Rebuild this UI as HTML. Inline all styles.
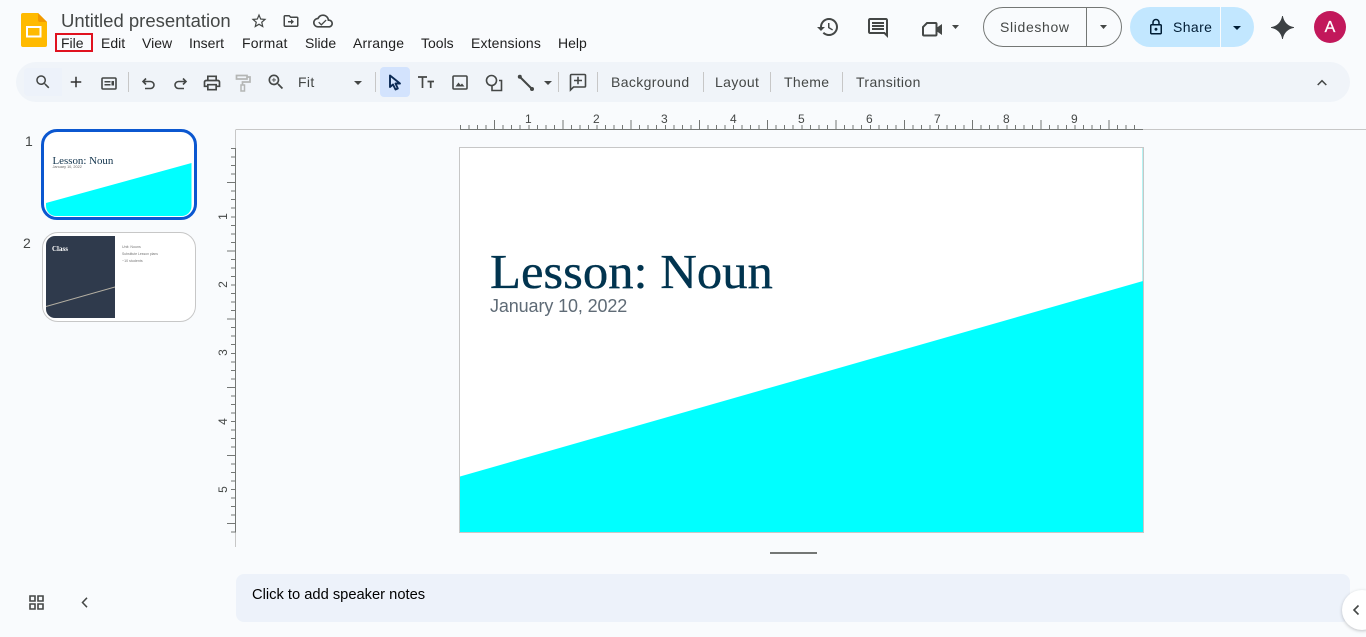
<!DOCTYPE html>
<html lang="en"><head><meta charset="utf-8"><title>Untitled presentation</title>
<style>
html,body{margin:0;padding:0;width:1366px;height:637px;overflow:hidden;background:#f9fbfd;font-family:"Liberation Sans",sans-serif}
.a{position:absolute;white-space:nowrap}
.m{top:35px;font-size:14px;line-height:17px;color:#1f1f1f}
.t{top:74px;font-size:14px;line-height:17px;color:#444746;letter-spacing:.38px}
.r{top:113px;font-size:12px;line-height:13px;color:#444746}
.rv{left:220px;font-size:12px;line-height:13px;color:#444746;transform:rotate(-90deg)}
.sep{position:absolute;top:72px;width:1px;height:20px;background:#c7c7c7}
svg.i{position:absolute;fill:#444746}
</style></head><body>

<!-- logo -->
<svg class="a" style="left:21px;top:13px" width="26" height="34" viewBox="0 0 26 34">
<path d="M2 0H17L26 9V32a2 2 0 0 1-2 2H2a2 2 0 0 1-2-2V2a2 2 0 0 1 2-2z" fill="#ffba00"/>
<path d="M17 0L26 9H19a2 2 0 0 1-2-2z" fill="#f29900"/>
<rect x="6" y="14" width="13.500" height="9.500" fill="none" stroke="#fff" stroke-width="2"/>
</svg>

<div class="a" style="left:61px;top:10px;font-size:18.500px;line-height:21px;color:#444746">Untitled presentation</div>
<svg class="i" style="left:250px;top:12px" width="18" height="18" viewBox="0 0 24 24"><path d="M22 9.240l-7.190-.620L12 2 9.190 8.630 2 9.240l5.460 4.730L5.820 21 12 17.270 18.180 21l-1.630-7.030L22 9.240zM12 15.400l-3.760 2.270 1-4.280-3.320-2.880 4.380-.380L12 6.100l1.710 4.040 4.380.380-3.320 2.880 1 4.280L12 15.400z"/></svg>
<svg class="i" style="left:282px;top:12px" width="18" height="18" viewBox="0 0 24 24"><path d="M20 6h-8l-2-2H4c-1.100 0-2 .9-2 2v12c0 1.100.9 2 2 2h16c1.100 0 2-.9 2-2V8c0-1.100-.9-2-2-2zm0 12H4V6h5.170l2 2H20v10zm-8-1.500l4-3.500-4-3.500V12H8v2h4v2.500z"/></svg>
<svg class="i" style="left:313px;top:11px" width="20" height="20" viewBox="0 0 24 24"><path d="M19.350 10.040C18.670 6.590 15.640 4 12 4 9.110 4 6.600 5.640 5.350 8.040 2.340 8.360 0 10.910 0 14c0 3.310 2.690 6 6 6h13c2.760 0 5-2.240 5-5 0-2.640-2.050-4.780-4.650-4.960zM19 18H6c-2.210 0-4-1.790-4-4 0-2.050 1.530-3.760 3.560-3.970l1.070-.11.500-.950C8.080 7.140 9.940 6 12 6c2.620 0 4.880 1.860 5.390 4.430l.300 1.500 1.530.110c1.560.100 2.780 1.410 2.780 2.960 0 1.650-1.350 3-3 3zm-9-2.500l-2.600-2.600-1.100 1.100L10 17.700l6.300-6.300-1.100-1.100z"/></svg>

<!-- menu -->
<div class="a" style="left:55px;top:33px;width:34px;height:15px;border:2px solid #e0121f"></div>
<div class="a m" style="left:61px">File</div>
<div class="a m" style="left:101px">Edit</div>
<div class="a m" style="left:142px">View</div>
<div class="a m" style="left:189px">Insert</div>
<div class="a m" style="left:242px;letter-spacing:.2px">Format</div>
<div class="a m" style="left:305px">Slide</div>
<div class="a m" style="left:353px;letter-spacing:.2px">Arrange</div>
<div class="a m" style="left:421px">Tools</div>
<div class="a m" style="left:471px;letter-spacing:.15px">Extensions</div>
<div class="a m" style="left:558px">Help</div>

<!-- header right -->
<svg class="i" style="left:816px;top:15px" width="24" height="24" viewBox="0 0 24 24"><path d="M13 3c-4.970 0-9 4.030-9 9H1l3.890 3.890.070.140L9 12H6c0-3.870 3.130-7 7-7s7 3.130 7 7-3.130 7-7 7c-1.930 0-3.680-.790-4.940-2.060l-1.420 1.420C8.270 19.990 10.510 21 13 21c4.970 0 9-4.030 9-9s-4.030-9-9-9zm-1 5v5l4.280 2.540.720-1.210-3.500-2.080V8H12z"/></svg>
<svg class="i" style="left:866px;top:16px" width="24" height="24" viewBox="0 0 24 24"><path d="M21.990 4c0-1.100-.890-2-1.990-2H4c-1.100 0-2 .9-2 2v12c0 1.100.9 2 2 2h14l4 4-.010-18zM20 4v13.170L18.830 16H4V4h16zM6 12h12v2H6zm0-3h12v2H6zm0-3h12v2H6z"/></svg>
<svg class="a" style="left:921px;top:20px" width="23" height="17" viewBox="0 0 23 17"><path d="M6 3H14.500a1 1 0 0 1 1 1V14.500a1 1 0 0 1-1 1H3a1 1 0 0 1-1-1V7z" fill="none" stroke="#444746" stroke-width="2"/><path d="M16 7.500L21 4V15L16 11.500z" fill="#444746"/></svg>
<svg class="i" style="left:952px;top:25px" width="7" height="4" viewBox="0 0 10 5" preserveAspectRatio="none"><path d="M0 0l5 5 5-5z"/></svg>

<div class="a" style="left:983px;top:7px;width:137px;height:38px;border:1px solid #747775;border-radius:20px"></div>
<div class="a" style="left:1086px;top:8px;width:1px;height:38px;background:#747775"></div>
<div class="a" style="left:1000px;top:19px;font-size:14px;line-height:17px;color:#444746;letter-spacing:.65px">Slideshow</div>
<svg class="i" style="left:1100px;top:25px" width="7" height="4" viewBox="0 0 10 5" preserveAspectRatio="none"><path d="M0 0l5 5 5-5z"/></svg>

<div class="a" style="left:1130px;top:7px;width:124px;height:40px;border-radius:20px;background:#c2e7ff"></div>
<div class="a" style="left:1220px;top:7px;width:1px;height:40px;background:#f9fbfd"></div>
<svg class="i" style="left:1147px;top:18px;fill:#001d35" width="18" height="18" viewBox="0 0 24 24"><path d="M18 8h-1V6c0-2.760-2.240-5-5-5S7 3.240 7 6v2H6c-1.100 0-2 .9-2 2v10c0 1.100.9 2 2 2h12c1.100 0 2-.9 2-2V10c0-1.100-.9-2-2-2zM9 6c0-1.660 1.340-3 3-3s3 1.340 3 3v2H9V6zm9 14H6V10h12v10zm-6-3c1.100 0 2-.9 2-2s-.9-2-2-2-2 .9-2 2 .9 2 2 2z"/></svg>
<div class="a" style="left:1173px;top:19px;font-size:14px;line-height:17px;color:#001d35;letter-spacing:.4px">Share</div>
<svg class="i" style="left:1233px;top:26px;fill:#001d35" width="8" height="4" viewBox="0 0 10 5" preserveAspectRatio="none"><path d="M0 0l5 5 5-5z"/></svg>

<svg class="a" style="left:1271px;top:16px" width="23" height="23" viewBox="0 0 24 24"><path d="M12 0C13 6.500 17.500 11 24 12 17.500 13 13 17.500 12 24 11 17.500 6.500 13 0 12 6.500 11 11 6.500 12 0z" fill="#3c4043" stroke="#3c4043" stroke-width=".8"/></svg>
<div class="a" style="left:1314px;top:11px;width:32px;height:32px;border-radius:50%;background:#c2185b;color:#fff;font-size:16px;line-height:33px;text-align:center;-webkit-text-stroke:.3px #fff">A</div>

<!-- toolbar -->
<div class="a" style="left:16px;top:62px;width:1334px;height:40px;border-radius:20px;background:#f0f4f9"></div>
<div class="a" style="left:24px;top:68px;width:38px;height:28px;border-radius:4px 0 0 4px;background:#edf2fa"></div>
<svg class="i" style="left:34px;top:73px" width="18" height="18" viewBox="0 0 24 24"><path d="M15.500 14h-.790l-.280-.270C15.410 12.590 16 11.110 16 9.500 16 5.910 13.090 3 9.500 3S3 5.910 3 9.500 5.910 16 9.500 16c1.610 0 3.090-.590 4.230-1.570l.270.280v.790l5 4.990L20.490 19l-4.990-5zm-6 0C7.010 14 5 11.990 5 9.500S7.010 5 9.500 5 14 7.010 14 9.500 11.990 14 9.500 14z"/></svg>
<svg class="i" style="left:67px;top:73px;fill:#303030" width="18" height="18" viewBox="0 0 24 24"><path d="M19 13h-6v6h-2v-6H5v-2h6V5h2v6h6v2z"/></svg>
<svg class="a" style="left:101px;top:77px" width="16" height="13" viewBox="0 0 16 13"><rect x="1" y="1" width="14" height="11" rx="1" fill="none" stroke="#444746" stroke-width="1.600"/><rect x="3.500" y="4" width="6" height="1.500" fill="#444746"/><rect x="3.500" y="7" width="6" height="1.500" fill="#444746"/><rect x="10.500" y="4" width="2.500" height="4.500" fill="#444746"/></svg>
<div class="sep" style="left:128px"></div>
<svg class="a" style="left:141px;top:76px" width="15" height="15" viewBox="0 0 15 15"><path d="M5 2.500L2 5.500 5 8.500M2.500 5.500H9.500A3.500 3.500 0 0 1 9.500 12.500H4" fill="none" stroke="#444746" stroke-width="1.600"/></svg>
<svg class="a" style="left:173px;top:76px" width="15" height="15" viewBox="0 0 15 15"><path d="M10 2.500L13 5.500 10 8.500M12.500 5.500H5.500A3.500 3.500 0 0 0 5.500 12.500H11" fill="none" stroke="#444746" stroke-width="1.600"/></svg>
<svg class="i" style="left:202px;top:73px" width="20" height="20" viewBox="0 0 24 24"><path d="M19 8h-1V3H6v5H5c-1.660 0-3 1.340-3 3v6h4v4h12v-4h4v-6c0-1.660-1.340-3-3-3zM8 5h8v3H8V5zm8 12v2H8v-4h8v2zm2-2v-2H6v2H4v-4c0-.550.450-1 1-1h14c.550 0 1 .450 1 1v4h-2z"/></svg>
<svg class="a" style="left:235px;top:74px" width="16" height="18" viewBox="0 0 16 18"><path d="M1.500 1.500H12V5H1.500zM12 3H15V8H7.500V11" fill="none" stroke="#b4b6b5" stroke-width="1.700"/><rect x="6" y="11" width="3.500" height="6" fill="none" stroke="#b4b6b5" stroke-width="1.500"/></svg>
<svg class="i" style="left:266px;top:72px" width="20" height="20" viewBox="0 0 24 24"><path d="M15.500 14h-.790l-.280-.270C15.410 12.590 16 11.110 16 9.500 16 5.910 13.090 3 9.500 3S3 5.910 3 9.500 5.910 16 9.500 16c1.610 0 3.090-.590 4.230-1.570l.270.280v.790l5 4.990L20.490 19l-4.990-5zm-6 0C7.010 14 5 11.990 5 9.500S7.010 5 9.500 5 14 7.010 14 9.500 11.990 14 9.500 14zM12 10h-2v2H9v-2H7V9h2V7h1v2h2v1z"/></svg>
<div class="a t" style="left:298px">Fit</div>
<svg class="i" style="left:354px;top:81px" width="8" height="4" viewBox="0 0 10 5" preserveAspectRatio="none"><path d="M0 0l5 5 5-5z"/></svg>
<div class="sep" style="left:375px"></div>
<div class="a" style="left:380px;top:67px;width:30px;height:30px;border-radius:4px;background:#d3e3fd"></div>
<svg class="a" style="left:388px;top:74px" width="14" height="17" viewBox="0 0 14 17"><path d="M2 1.500V13L5 10.500 7.500 15.500 9.800 14.500 7.500 9.500H12z" fill="none" stroke="#0b2a55" stroke-width="1.900" stroke-linejoin="round"/></svg>
<svg class="a" style="left:417px;top:75px" width="18" height="14" viewBox="0 0 18 14"><path d="M1 2H10M5.500 2V13M10.500 6.500H17M13.700 6.500V13" fill="none" stroke="#444746" stroke-width="1.700"/></svg>
<svg class="a" style="left:452px;top:75px" width="16" height="15" viewBox="0 0 16 15"><rect x="1" y="1" width="14" height="13" rx="1" fill="none" stroke="#444746" stroke-width="1.600"/><path d="M3.500 11.500L6.500 7.500 8.500 10 10 8.500 12.500 11.500z" fill="#444746"/></svg>
<svg class="a" style="left:485px;top:74px" width="18" height="18" viewBox="0 0 18 18"><circle cx="6.500" cy="6.500" r="5" fill="none" stroke="#444746" stroke-width="1.600"/><path d="M14 6.500H16.500V16.500H7V12" fill="none" stroke="#444746" stroke-width="1.600"/></svg>
<svg class="a" style="left:517px;top:74px" width="18" height="18" viewBox="0 0 18 18"><path d="M2.500 2.500L15 15" stroke="#444746" stroke-width="2"/><circle cx="2.800" cy="2.800" r="2" fill="#444746"/><circle cx="15" cy="15" r="2" fill="#444746"/></svg>
<svg class="i" style="left:544px;top:81px" width="8" height="4" viewBox="0 0 10 5" preserveAspectRatio="none"><path d="M0 0l5 5 5-5z"/></svg>
<div class="sep" style="left:558px"></div>
<svg class="a" style="left:569px;top:73px" width="18" height="19" viewBox="0 0 18 19"><path d="M1.500 2.500a1 1 0 0 1 1-1H15.500a1 1 0 0 1 1 1V13a1 1 0 0 1-1 1H4.500L1.500 17z" fill="none" stroke="#444746" stroke-width="1.600"/><path d="M5 7.500H13M9 3.800V11.200" stroke="#444746" stroke-width="1.600"/></svg>
<div class="sep" style="left:597px"></div>
<div class="a t" style="left:611px">Background</div>
<div class="sep" style="left:703px"></div>
<div class="a t" style="left:715px">Layout</div>
<div class="sep" style="left:770px"></div>
<div class="a t" style="left:784px">Theme</div>
<div class="sep" style="left:842px"></div>
<div class="a t" style="left:856px">Transition</div>
<svg class="a" style="left:1317px;top:79px" width="10" height="7" viewBox="0 0 10 7"><path d="M.7 6L5 1.700 9.300 6" fill="none" stroke="#444746" stroke-width="1.500"/></svg>

<!-- filmstrip -->
<div class="a" style="left:25px;top:133px;font-size:14px;line-height:17px;color:#444746">1</div>
<div class="a" style="left:23px;top:235px;font-size:14px;line-height:17px;color:#444746">2</div>
<div class="a" style="left:41px;top:129px;width:150px;height:85px;border:3px solid #0b57d0;border-radius:16px;background:#fff"></div>
<svg class="a" style="left:46px;top:160px" width="146" height="57" viewBox="0 0 146 57"><path d="M0 43L145.500 3V46A10 10 0 0 1 135.500 56H10A10 10 0 0 1 0 46z" fill="#00ffff"/></svg>
<div class="a" style="left:52.500px;top:155px;font-family:'Liberation Serif',serif;font-size:10.900px;line-height:13px;color:#12344d">Lesson: Noun</div>
<div class="a" style="left:52.500px;top:165px;font-size:3.800px;line-height:5px;color:#666">January 10, 2022</div>

<div class="a" style="left:42px;top:232px;width:152px;height:88px;border:1px solid #c7c7c7;border-radius:16px;background:#fff"></div>
<div class="a" style="left:46px;top:236px;width:69px;height:82px;background:#2f3a4c;border-radius:9px 0 0 9px"></div>
<svg class="a" style="left:46px;top:285px" width="69" height="24" viewBox="0 0 69 24"><path d="M0 21.500L69 2" stroke="#b5b0a3" stroke-width="1"/></svg>
<div class="a" style="left:52px;top:245px;font-family:'Liberation Serif',serif;font-size:7px;line-height:9px;color:#fff;font-weight:bold">Class</div>
<div class="a" style="left:122px;top:245px;font-size:3.600px;line-height:5px;color:#777">Unit: Nouns</div>
<div class="a" style="left:122px;top:252px;font-size:3.400px;line-height:5px;color:#777">Substitute Lesson plans</div>
<div class="a" style="left:122px;top:259px;font-size:3.600px;line-height:5px;color:#777">~10 students</div>

<!-- rulers -->
<svg class="a" style="left:0;top:0" width="1366" height="560" viewBox="0 0 1366 560" shape-rendering="crispEdges">
<defs>
<path id="h" d="M0.500 125V129M9 125V129M17.500 125V129M26 125V129M34.500 120V129M43 125V129M51.500 125V129M60 125V129" stroke="#747775" stroke-width="1" fill="none"/>
<path id="v" d="M231 0.500H236M231 9H236M231 17.500H236M231 26H236M227 34.500H236M231 43H236M231 51.500H236M231 60H236" stroke="#747775" stroke-width="1" fill="none"/>
</defs>
<path d="M236 129.500H1366M235.500 129.500V148M235.500 532V547" stroke="#c7c7c7" stroke-width="1" fill="none"/>
<path d="M460 129.500H1143M235.500 148V532" stroke="#747775" stroke-width="1" fill="none"/>
<use href="#h" x="460"/><use href="#h" x="528.300"/><use href="#h" x="596.600"/><use href="#h" x="664.900"/><use href="#h" x="733.200"/><use href="#h" x="801.500"/><use href="#h" x="869.800"/><use href="#h" x="938.100"/><use href="#h" x="1006.400"/><use href="#h" x="1074.700"/>
<use href="#v" y="148"/><use href="#v" y="216.300"/><use href="#v" y="284.600"/><use href="#v" y="352.900"/><use href="#v" y="421.200"/>
<path d="M231 489.500H236M231 498H236M231 506.500H236M231 515H236M227 523.500H236M231 532H236" stroke="#747775" stroke-width="1" fill="none"/>
</svg>
<div class="a r" style="left:525px">1</div>
<div class="a r" style="left:593px">2</div>
<div class="a r" style="left:661px">3</div>
<div class="a r" style="left:730px">4</div>
<div class="a r" style="left:798px">5</div>
<div class="a r" style="left:866px">6</div>
<div class="a r" style="left:934px">7</div>
<div class="a r" style="left:1003px">8</div>
<div class="a r" style="left:1071px">9</div>
<div class="a rv" style="top:210px">1</div>
<div class="a rv" style="top:278px">2</div>
<div class="a rv" style="top:346px">3</div>
<div class="a rv" style="top:415px">4</div>
<div class="a rv" style="top:483px">5</div>

<!-- slide -->
<div class="a" style="left:459px;top:147px;width:683px;height:384px;background:#fff;border:1px solid #c7c7c7"></div>
<div class="a" style="left:1142px;top:148px;width:1px;height:133px;background:#b5f3f3"></div>
<svg class="a" style="left:460px;top:148px" width="683" height="384" viewBox="0 0 683 384"><path d="M0 328.500L683 133V384H0z" fill="#00ffff"/></svg>
<div class="a" style="left:490px;top:244px;font-family:'Liberation Serif',serif;font-size:49px;line-height:55px;color:#01344f;transform:scaleX(1.034);transform-origin:0 0;-webkit-text-stroke:.35px #01344f">Lesson: Noun</div>
<div class="a" style="left:490px;top:295px;font-size:18px;line-height:22px;color:#5f6b76;letter-spacing:-.12px">January 10, 2022</div>

<!-- bottom -->
<div class="a" style="left:770px;top:552px;width:47px;height:1.500px;background:#747775"></div>
<svg class="a" style="left:29px;top:595px" width="15" height="15" viewBox="0 0 15 15"><path d="M1 1H6V6H1zM9 1H14V6H9zM1 9H6V14H1zM9 9H14V14H9z" fill="none" stroke="#444746" stroke-width="1.600"/></svg>
<svg class="a" style="left:81px;top:597px" width="7" height="11" viewBox="0 0 7 11"><path d="M6 .8L1.500 5.500 6 10.200" fill="none" stroke="#444746" stroke-width="1.500"/></svg>
<div class="a" style="left:236px;top:574px;width:1114px;height:48px;border-radius:8px;background:#edf2fa"></div>
<div class="a" style="left:252px;top:587px;font-size:14.700px;line-height:17px;color:#000">Click to add speaker notes</div>
<div class="a" style="left:1342px;top:590px;width:40px;height:40px;border-radius:50%;background:#fff;box-shadow:0 1px 3px rgba(60,64,67,.3)"></div>
<svg class="a" style="left:1352px;top:604px" width="8" height="12" viewBox="0 0 8 12"><path d="M6.500 1.500L2 6 6.500 10.500" fill="none" stroke="#444746" stroke-width="1.600"/></svg>
</body></html>
